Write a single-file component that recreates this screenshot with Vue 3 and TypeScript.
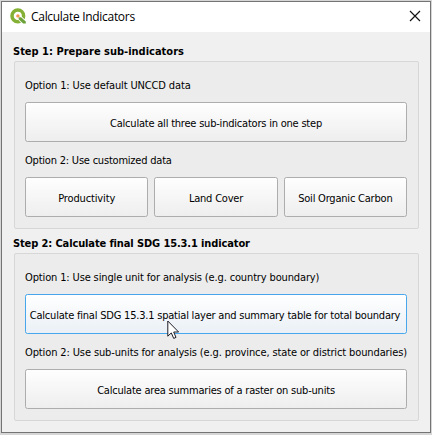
<script setup lang="ts">
interface Action {
  label: string
  cls: string
  active?: boolean
}
interface Option {
  caption: string
  cls: string
  actions: Action[]
}
interface Step {
  title: string
  cls: string
  options: Option[]
}

const steps: Step[] = [
  {
    title: 'Step 1: Prepare sub-indicators',
    cls: 'regular',
    options: [
      {
        caption: 'Option 1: Use default UNCCD data',
        cls: 'snug',
        actions: [{ label: 'Calculate all three sub-indicators in one step', cls: 'tight' }],
      },
      {
        caption: 'Option 2: Use customized data',
        cls: 'tight',
        actions: [
          { label: 'Productivity', cls: 'snug' },
          { label: 'Land Cover', cls: 'tight' },
          { label: 'Soil Organic Carbon', cls: 'tight' },
        ],
      },
    ],
  },
  {
    title: 'Step 2: Calculate final SDG 15.3.1 indicator',
    cls: 'close-set',
    options: [
      {
        caption: 'Option 1: Use single unit for analysis (e.g. country boundary)',
        cls: 'snug',
        actions: [
          {
            label: 'Calculate final SDG 15.3.1 spatial layer and summary table for total boundary',
            cls: 'tight',
            active: true,
          },
        ],
      },
      {
        caption: 'Option 2: Use sub-units for analysis (e.g. province, state or district boundaries)',
        cls: 'close-set',
        actions: [{ label: 'Calculate area summaries of a raster on sub-units', cls: 'tight' }],
      },
    ],
  },
]
</script>

<template>
  <div class="desktop">
    <div class="dialog">
      <header class="titlebar">
        <svg class="logo" width="16" height="16" viewBox="0 0 16 16">
          <circle cx="7.8" cy="7.9" r="5.8" fill="none" stroke="#84b135" stroke-width="3.5" />
          <path d="M7 7 L10 7 L16 12.4 V16 H12 L7.6 11 Z" fill="#fff" />
          <path d="M8.6 9.2 H11 L15.8 13.6 V15.4 H13.2 L8.6 11.2 Z" fill="#6ba33a" />
          <circle cx="7.9" cy="7.9" r="1.7" fill="#f0954b" />
        </svg>
        <span class="title">Calculate Indicators</span>
        <svg class="close" width="12" height="12" viewBox="0 0 12 12">
          <path d="M1 1 L11 11 M11 1 L1 11" stroke="#111" stroke-width="1.15" />
        </svg>
      </header>
      <main class="body">
        <section v-for="step in steps" :key="step.title" class="step">
          <h2 class="heading"><span :class="step.cls">{{ step.title }}</span></h2>
          <div class="group">
            <template v-for="option in step.options" :key="option.caption">
              <p class="caption"><span :class="option.cls">{{ option.caption }}</span></p>
              <div class="row">
                <button
                  v-for="action in option.actions"
                  :key="action.label"
                  type="button"
                  :class="['button', { active: action.active }]"
                >
                  <span :class="action.cls">{{ action.label }}</span>
                </button>
              </div>
            </template>
          </div>
        </section>
      </main>
    </div>
    <svg class="cursor" width="13" height="20" viewBox="0 0 13 20">
      <path
        d="M0.8 1 V16.2 L4.3 12.9 L6.7 18.4 L9 17.4 L6.7 12 H11.6 Z"
        fill="#fff"
        stroke="#1b1b25"
        stroke-width="1"
      />
    </svg>
  </div>
</template>

<style>
body {
  overflow: hidden;
}
</style>

<style scoped>
.desktop {
  position: relative;
  box-sizing: border-box;
  width: 432px;
  height: 435px;
  padding: 1px 1px 2px;
  background: #d6d6d6;
}
.dialog {
  box-sizing: border-box;
  width: 430px;
  height: 432px;
  border: 1px solid #747474;
  background: #f0f0f0;
}
.titlebar {
  display: flex;
  align-items: center;
  box-sizing: border-box;
  height: 30px;
  padding: 0 9px 0 8px;
  background: #fff;
}
.logo {
  margin-top: -2px;
}
.title {
  margin-left: 5px;
  font: 12px/16px "Open Sans", "Noto Sans", sans-serif;
  letter-spacing: -0.3px;
  white-space: nowrap;
  color: #000;
}
.close {
  margin: -2px 0 0 auto;
}
.body {
  padding: 11px 11px 0 12px;
  font: 11px/14px "DejaVu Sans Condensed", "DejaVu Sans", sans-serif;
  font-stretch: condensed;
  color: #000;
}
.step {
  margin-bottom: 6px;
}
.heading {
  box-sizing: border-box;
  height: 18px;
  margin: 0 0 0 -1px;
  padding-top: 1px;
  font-size: 11px;
  font-weight: bold;
  line-height: 15px;
  white-space: nowrap;
}
.group {
  box-sizing: border-box;
  height: 168px;
  padding: 17px 11px 0 10px;
  border: 1px solid #d7d7d7;
  border-radius: 2px;
  background: #ececec;
}
.caption {
  height: 14px;
  margin: 0 0 9px;
  white-space: nowrap;
}
.row {
  display: flex;
  gap: 6px;
  margin-bottom: 12px;
}
.button {
  display: flex;
  flex: 1 1 0;
  align-items: center;
  justify-content: center;
  box-sizing: border-box;
  min-width: 0;
  height: 40px;
  padding: 4px 0 0;
  border: 1px solid #adadad;
  border-radius: 2.5px;
  background: linear-gradient(#fefefe, #eeeeee);
  font: inherit;
  color: inherit;
  white-space: nowrap;
}
.button.active {
  padding-right: 2px;
  border-color: #47a7ec;
  background: linear-gradient(#ffffff, #eaf0f6);
}
.close-set {
  letter-spacing: -0.12px;
}
.snug {
  letter-spacing: -0.14px;
}
.tight {
  letter-spacing: -0.21px;
}
.cursor {
  position: absolute;
  left: 167px;
  top: 320px;
}
</style>
